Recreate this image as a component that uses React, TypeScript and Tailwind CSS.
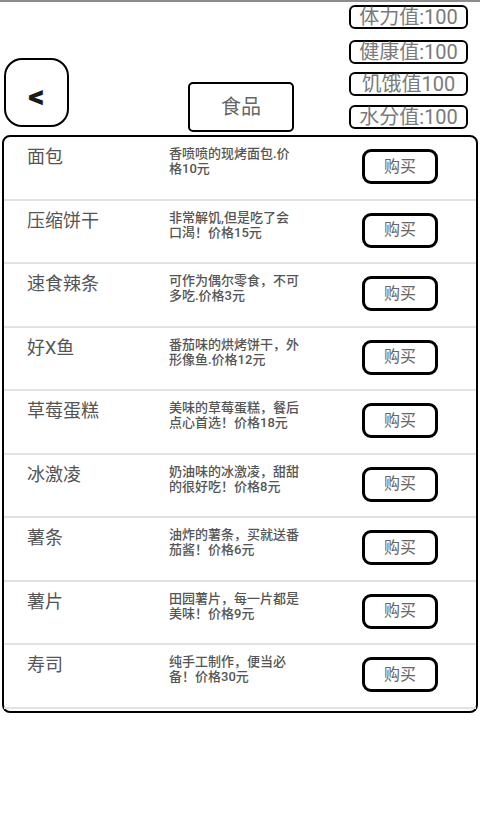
import React from "react";

// Food shop item data
const foods = [
  { name: "面包", desc: "香喷喷的现烤面包.价格10元" },
  { name: "压缩饼干", desc: "非常解饥,但是吃了会口渴！价格15元" },
  { name: "速食辣条", desc: "可作为偶尔零食，不可多吃.价格3元" },
  { name: "好X鱼", desc: "番茄味的烘烤饼干，外形像鱼.价格12元" },
  { name: "草莓蛋糕", desc: "美味的草莓蛋糕，餐后点心首选！价格18元" },
  { name: "冰激凌", desc: "奶油味的冰激凌，甜甜的很好吃！价格8元" },
  { name: "薯条", desc: "油炸的薯条，买就送番茄酱！价格6元" },
  { name: "薯片", desc: "田园薯片，每一片都是美味！价格9元" },
  { name: "寿司", desc: "纯手工制作，便当必备！价格30元" },
];

const StatBox: React.FC<{ label: string; className?: string }> = ({
  label,
  className = "",
}) => (
  <div
    className={`h-[24px] w-[119px] rounded-[6px] border-2 border-black flex items-center justify-center text-[20px] leading-[20px] text-[#7a7a7a] whitespace-nowrap ${className}`}
  >
    {label}
  </div>
);

export default function App() {
  return (
    <div className="min-h-[825px] w-[480px] bg-white border-t-2 border-[#8c8c8c] font-['Roboto','Noto_Sans_CJK_SC',sans-serif]">
      {/* Header */}
      <div className="flex h-[133px]">
        {/* Back button */}
        <button className="ml-[4px] mt-[56px] w-[65px] h-[69px] rounded-[18px] border-2 border-black flex items-center justify-center pt-[6px] text-[32px] leading-[32px] font-black text-[#1a1a1a]">
          &lt;
        </button>

        {/* Category title */}
        <div className="ml-[119px] mt-[80px] w-[106px] h-[50px] rounded-[5px] border-2 border-black flex items-center justify-center text-[20px] text-[#666]">
          食品
        </div>

        {/* Stats */}
        <div className="ml-[55px] flex flex-col">
          <StatBox label="体力值:100" className="mt-[3px]" />
          <StatBox label="健康值:100" className="mt-[11px]" />
          <StatBox label="饥饿值100" className="mt-[8px]" />
          <StatBox label="水分值:100" className="mt-[9px]" />
        </div>
      </div>

      {/* Food list */}
      <div className="ml-[2px] w-[476px] rounded-[8px] border-2 border-black pb-[2px]">
        {foods.map((f) => (
          <div
            key={f.name}
            className="flex h-[63.5px] border-b-2 border-[#e2e2e2]"
          >
            <div className="ml-[23px] mt-[11px] w-[142px] text-[18px] leading-[18px] text-[#555]">
              {f.name}
            </div>
            <div className="mt-[9px] w-[132px] text-[13px] leading-[15px] font-medium text-[#555]">
              {f.desc}
            </div>
            <button className="ml-[61px] mt-[12px] w-[76px] h-[35px] rounded-[9px] border-[3px] border-black flex items-center justify-center text-[16px] text-[#666]">
              购买
            </button>
          </div>
        ))}
      </div>
    </div>
  );
}
